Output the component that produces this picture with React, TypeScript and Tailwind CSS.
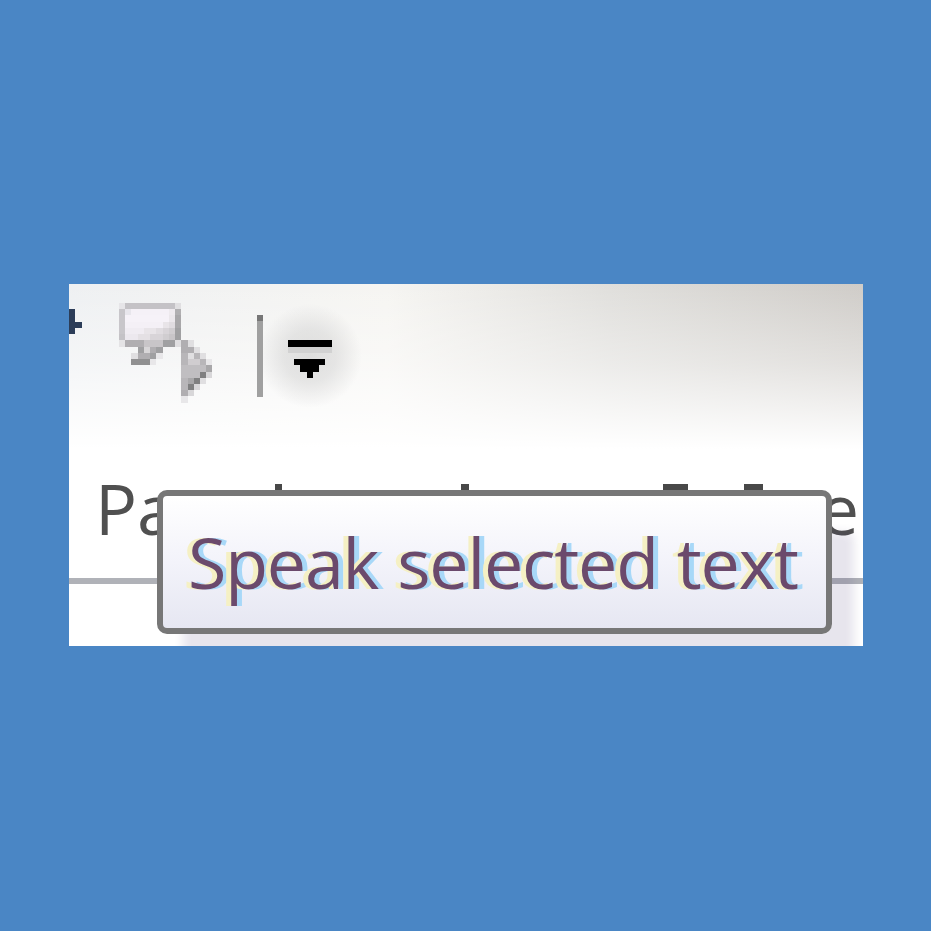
// Tooltip over a blurry, zoomed-in ribbon

// pixel rows of the speak icon, [row, col, span, colour]
const SPEAK_PIXELS: [number, number, number, string][] = [
  [0, 0, 1, '#e6e5e8'], [0, 1, 8, '#c4c2c6'], [0, 9, 1, '#e0dfe1'],
  [1, 0, 1, '#c8c6ca'], [1, 1, 1, '#e8e6ec'], [1, 2, 6, '#f5f1f7'], [1, 8, 1, '#eeeaee'], [1, 9, 1, '#b0afb1'],
  [2, 0, 1, '#c8c6ca'], [2, 1, 7, '#f6f2f8'], [2, 8, 1, '#ebe7eb'], [2, 9, 1, '#a8a7a9'],
  [3, 0, 1, '#c8c6ca'], [3, 1, 6, '#f4f0f6'], [3, 7, 1, '#e8e4e8'], [3, 8, 1, '#e0dce0'], [3, 9, 1, '#a8a7a9'],
  [4, 0, 1, '#c8c6ca'], [4, 1, 3, '#f0ecf2'], [4, 4, 2, '#e8e4e8'], [4, 6, 1, '#e0dce0'], [4, 7, 1, '#d8d4d8'], [4, 8, 1, '#d0cdd0'], [4, 9, 1, '#a0a0a2'],
  [5, 0, 1, '#c4c2c6'], [5, 1, 2, '#ece8ee'], [5, 3, 2, '#e4e0e4'], [5, 5, 2, '#d8d4d8'], [5, 7, 1, '#d0cdd0'], [5, 8, 1, '#c8c5c8'], [5, 9, 1, '#a0a0a2'],
  [6, 0, 1, '#e4e3e5'], [6, 1, 3, '#b0aeb1'], [6, 4, 3, '#c8c5c8'], [6, 7, 2, '#a0a0a2'], [6, 9, 1, '#e0dfe1'],
  [7, 3, 1, '#a0a0a2'], [7, 4, 1, '#d8d6d8'], [7, 5, 1, '#b0aeb1'], [7, 6, 1, '#a0a0a2'],
  [8, 2, 1, '#e0dfe1'], [8, 3, 2, '#b0aeb1'], [8, 5, 1, '#a0a0a2'], [8, 6, 1, '#e8e7e9'],
  [9, 2, 3, '#909091'], [9, 5, 1, '#e8e7e9'],
  [6, 10, 1, '#b0aeb1'], [6, 11, 1, '#e0dfe1'],
  [7, 10, 2, '#b0aeb1'], [7, 12, 1, '#e0dfe1'],
  [8, 10, 1, '#b8b6b9'], [8, 11, 1, '#e0dfe1'], [8, 12, 1, '#b8b6b9'], [8, 13, 1, '#e0dfe1'],
  [9, 10, 1, '#b8b6b9'], [9, 11, 2, '#d0cdd0'], [9, 13, 1, '#b8b6b9'], [9, 14, 1, '#e8e7e9'],
  [10, 10, 4, '#c0bec1'], [10, 14, 1, '#a8a7a9'],
  [11, 10, 3, '#c0bec1'], [11, 13, 1, '#808081'], [11, 14, 1, '#d8d7d9'],
  [12, 10, 1, '#b8b6b9'], [12, 11, 1, '#a8a7a9'], [12, 12, 1, '#808081'], [12, 13, 1, '#e0dfe1'],
  [13, 10, 1, '#b8b6b9'], [13, 11, 1, '#808081'], [13, 12, 1, '#d8d7d9'],
  [14, 10, 1, '#b0aeb1'], [14, 11, 1, '#d8d7d9'],
  [15, 10, 1, '#e8e7e9'],
]

function SpeakIcon() {
  return (
    <svg width="100" height="100" viewBox="0 0 100 100" shapeRendering="crispEdges" className="shrink-0">
      {SPEAK_PIXELS.map(([row, col, span, color]) => (
        <rect key={`${row}-${col}`} x={col * 6.23} y={row * 6.23} width={span * 6.23} height="6.23" fill={color} />
      ))}
    </svg>
  )
}

function FilterIcon() {
  return (
    <svg width="44" height="40" viewBox="0 0 44 40" shapeRendering="crispEdges" className="shrink-0">
      <rect x="0" y="0" width="44" height="7" fill="#000" />
      <rect x="0" y="7" width="44" height="6" fill="#d2d2d2" />
      <rect x="6" y="19" width="31" height="6" fill="#000" />
      <rect x="12" y="25" width="19" height="7" fill="#000" />
      <rect x="19" y="32" width="6" height="6" fill="#000" />
    </svg>
  )
}

const tabBumps = ['left-[206px] w-[7px]', 'left-[392px] w-[8px]', 'left-[594px] w-[25px]', 'left-[675px] w-[19px]']

export default function App() {
  return (
    <div className="w-[931px] h-[931px] bg-[#4a86c5] pl-[69px] pt-[284px] font-['Open_Sans','Noto_Sans',sans-serif]">
      <div className="relative w-[794px] h-[362px] overflow-hidden bg-white">
        {/* ribbon background */}
        <div className="h-[200px] bg-[radial-gradient(circle_at_241px_72px,rgba(200,200,200,0.55)_0px,rgba(200,200,200,0.4)_26px,rgba(200,200,200,0)_52px),linear-gradient(to_bottom,rgba(255,255,255,0)_0px,rgba(255,255,255,0.4)_80px,#fff_165px),linear-gradient(to_right,#eef0f2_0%,#f6f5f2_40%,#e0dfdc_68%,#cfccc8_100%)]">
          <div className="flex items-start">
            <div className="w-[13px] h-[25px] mt-[25px] shrink-0 bg-[#2c3d58] [clip-path:polygon(0_0,46%_0,46%_52%,100%_52%,100%_76%,46%_76%,46%_100%,0_100%)]" />
            <div className="ml-[37px] mt-[19px]">
              <SpeakIcon />
            </div>
            <div className="ml-[38px] mt-[31px] w-[6px] h-[82px] bg-[#a0a0a0] border-t-[6px] border-[#777]" />
            <div className="ml-[25px] mt-[56px]">
              <FilterIcon />
            </div>
          </div>
        </div>

        {/* tab row, mostly under the tooltip */}
        <div className="absolute left-0 top-[180px] w-full flex justify-between pl-[26px] pr-[4px] text-[70px] leading-[88px] text-[#505050]">
          <span>Pa</span>
          <span>e</span>
        </div>
        {tabBumps.map(b => (
          <div key={b} className={`absolute top-[200px] h-[6px] bg-[#484848] ${b}`} />
        ))}
        <div className="absolute left-0 top-[294px] w-full h-[6px] bg-[#b0b2b8]" />

        {/* tooltip */}
        <div className="absolute left-[88px] top-[206px] w-[675px] h-[144px] rounded-[10px] border-[6px] border-[#777] bg-[linear-gradient(to_bottom,#fff_0%,#f3f3fa_50%,#e6e7f2_100%)] shadow-[24px_40px_10px_-2px_rgba(60,40,110,0.12)] flex items-center pl-[25px]">
          <span className="text-[70px] leading-none tracking-[-1.2px] [word-spacing:2px] whitespace-nowrap text-[#6b4a6c] [text-shadow:-5px_0_0_#f5f0c4,5px_0_0_#a8d8f8]">
            Speak selected text
          </span>
        </div>
      </div>
    </div>
  )
}
